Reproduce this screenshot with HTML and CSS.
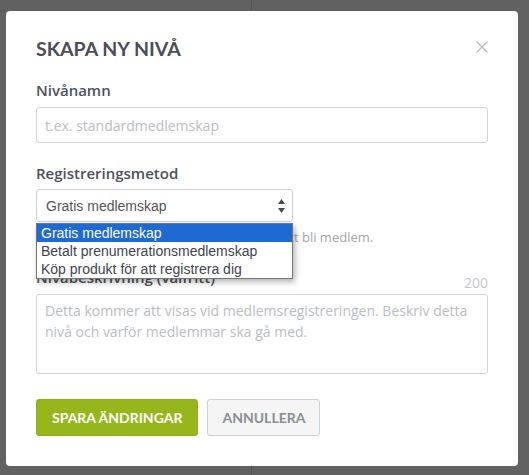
FILE: index.html
```html
<!DOCTYPE html>
<html lang="sv">
<head>
    <meta charset="UTF-8">
    <meta name="viewport" content="width=device-width, initial-scale=1.0">
    <title>Skapa ny nivå</title>
    <link rel="stylesheet" href="styles.css">
</head>
<body>

    <div class="page">
        <div class="page-side"></div>
        <div class="page-main"></div>
    </div>

    <div class="overlay">
        <div class="modal">
            <div class="modal-head">
                <h2 class="modal-title">SKAPA NY NIVÅ</h2>
                <button type="button" class="close" aria-label="Stäng">
                    <svg width="12" height="12" viewBox="0 0 12 12"><path d="M0.5 0.5 L11.5 11.5 M11.5 0.5 L0.5 11.5" stroke="#b4b4b4" stroke-width="1.1" fill="none"/></svg>
                </button>
            </div>

            <div class="field">
                <label class="field-label">Nivånamn</label>
                <input type="text" class="text-input" placeholder="t.ex. standardmedlemskap">
            </div>

            <div class="field">
                <label class="field-label">Registreringsmetod</label>
                <div class="select-wrap">
                    <div class="select">
                        <span>Gratis medlemskap</span>
                        <svg class="select-arrows" width="7" height="14" viewBox="0 0 7 14"><path d="M3.5 0 L7 5 L0 5 Z M0 9 L7 9 L3.5 14 Z" fill="#4a4a4a"/></svg>
                    </div>
                    <ul class="select-list">
                        <li class="active">Gratis medlemskap</li>
                        <li>Betalt prenumerationsmedlemskap</li>
                        <li>Köp produkt för att registrera dig</li>
                    </ul>
                </div>
                <p class="hint">Välj hur användare kan registrera sig för att bli medlem.</p>
            </div>

            <div class="field">
                <div class="label-row">
                    <label class="field-label">Nivåbeskrivning (valfritt)</label>
                    <span class="counter">200</span>
                </div>
                <textarea class="text-area" placeholder="Detta kommer att visas vid medlemsregistreringen. Beskriv detta nivå och varför medlemmar ska gå med."></textarea>
            </div>

            <div class="actions">
                <button type="button" class="btn btn-primary">SPARA ÄNDRINGAR</button>
                <button type="button" class="btn btn-default">ANNULLERA</button>
            </div>
        </div>
    </div>

</body>
</html>
```

FILE: styles.css
```css
body { margin: 0; height: 475px; overflow: hidden; background: #fff; font-family: "Open Sans", sans-serif; }
.page { display: flex; height: 475px; }
.page-side { width: 251px; border-right: 1px solid #ddd; }
.page-main { flex: 1; }

.overlay { position: fixed; inset: 0; background: rgba(0, 0, 0, 0.62); }
.modal { width: 512px; margin: 11px 0 0 6px; box-sizing: border-box; padding: 25px 30px 30px 30px; background: #fff; border-radius: 4px; }

.modal-head { display: flex; justify-content: space-between; align-items: flex-start; margin-bottom: 18px; }
.modal-title { margin: 0; font-family: Lato, sans-serif; font-weight: 700; font-size: 19.5px; line-height: 26px; color: #4a4e56; }
.close { margin-top: 5px; padding: 0; border: none; background: none; width: 12px; height: 12px; cursor: pointer; }
.close svg { display: block; }

.field + .field { margin-top: 20px; }
.field-label { display: block; font-weight: 600; font-size: 15px; line-height: 21px; color: #4d5159; }

.text-input { display: block; width: 100%; box-sizing: border-box; height: 36px; margin-top: 6px; padding: 0 8px; border: 1px solid #d3d3d3; border-radius: 3px; font-family: "Open Sans", sans-serif; font-size: 14px; color: #555; }
.text-input::placeholder, .text-area::placeholder { color: #babdc3; }

.select-wrap { position: relative; width: 257px; margin-top: 5px; }
.select { display: flex; align-items: center; justify-content: space-between; height: 33px; box-sizing: border-box; padding: 0 7px 0 9px; border: 1px solid #cfcfcf; border-radius: 3px; background: #fff; font-family: "Liberation Sans", Arial, sans-serif; font-size: 14px; color: #555; }
.select-arrows { display: block; }
.select-list { position: absolute; top: 100%; left: 0; right: 0; margin: 1px 0 0 0; padding: 0; list-style: none; background: #fff; border: 1px solid #767676; box-shadow: 2px 3px 6px rgba(0, 0, 0, 0.3); font-family: "Liberation Sans", Arial, sans-serif; font-size: 14px; z-index: 2; }
.select-list li { height: 18px; line-height: 18px; padding-left: 4px; color: #3e4450; white-space: nowrap; }
.select-list li.active { background: #1e69d2; color: #fff; }

.hint { margin: 6px 0 0 0; font-size: 13px; line-height: 19px; color: #a3a6ab; }

.label-row { display: flex; justify-content: space-between; align-items: flex-end; }
.counter { font-size: 14px; line-height: 21px; color: #c4c6ca; margin-bottom: -5px; }
.text-area { display: block; width: 100%; box-sizing: border-box; height: 80px; margin-top: 6px; padding: 5px 8px; border: 1px solid #d3d3d3; border-radius: 3px; font-family: "Open Sans", sans-serif; font-size: 14px; line-height: 21px; resize: none; }

.actions { display: flex; gap: 9px; margin-top: 25px; }
.btn { height: 37px; padding: 0 15px; border-radius: 3px; font-family: Lato, sans-serif; font-weight: 700; font-size: 14px; cursor: pointer; }
.btn-primary { background: #96b71b; border: 1px solid #8fae18; color: #fff; }
.btn-default { padding: 0 14px; background: #f5f5f5; border: 1px solid #cdd0d4; color: #8a8e96; }
```
